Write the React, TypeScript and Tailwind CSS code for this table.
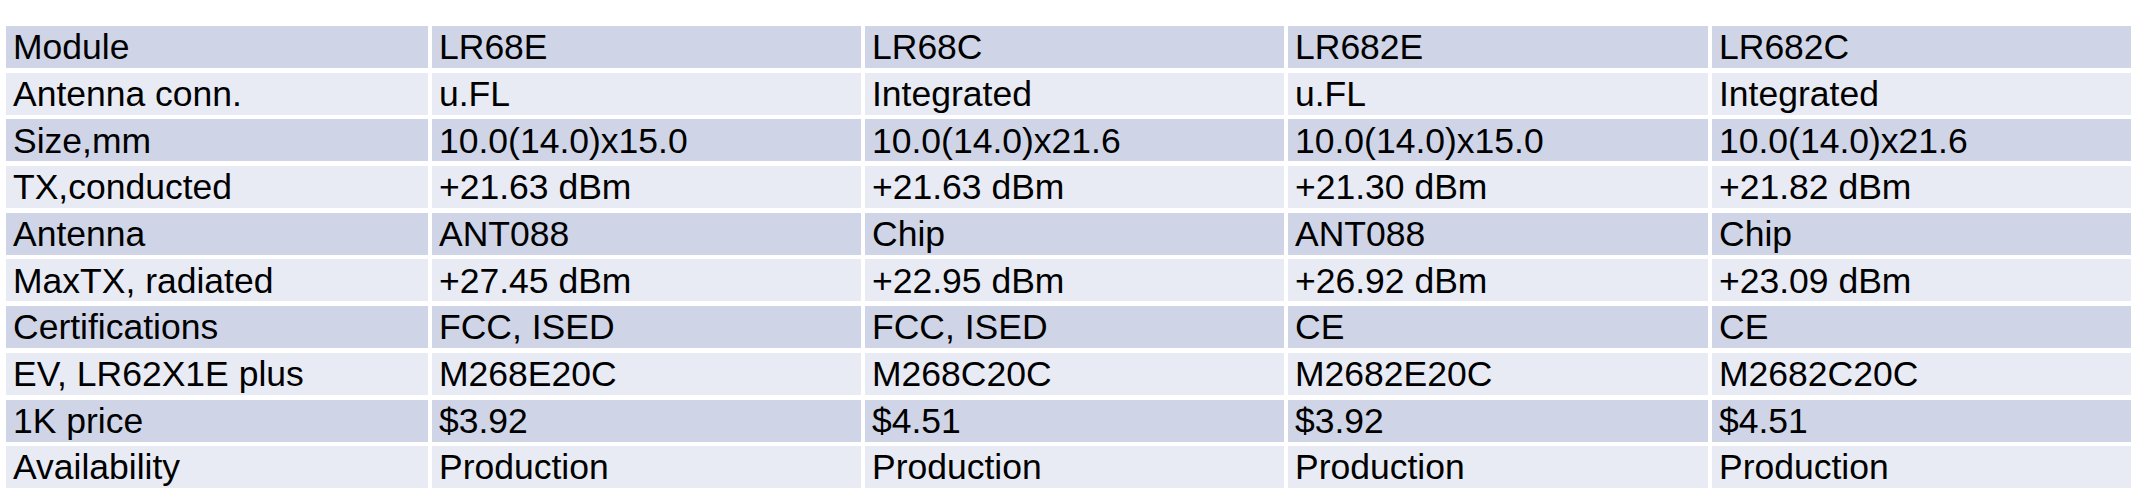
const rows: string[][] = [
  ["Module", "LR68E", "LR68C", "LR682E", "LR682C"],
  ["Antenna conn.", "u.FL", "Integrated", "u.FL", "Integrated"],
  ["Size,mm", "10.0(14.0)x15.0", "10.0(14.0)x21.6", "10.0(14.0)x15.0", "10.0(14.0)x21.6"],
  ["TX,conducted", "+21.63 dBm", "+21.63 dBm", "+21.30 dBm", "+21.82 dBm"],
  ["Antenna", "ANT088", "Chip", "ANT088", "Chip"],
  ["MaxTX, radiated", "+27.45 dBm", "+22.95 dBm", "+26.92 dBm", "+23.09 dBm"],
  ["Certifications", "FCC, ISED", "FCC, ISED", "CE", "CE"],
  ["EV, LR62X1E plus", "M268E20C", "M268C20C", "M2682E20C", "M2682C20C"],
  ["1K price", "$3.92", "$4.51", "$3.92", "$4.51"],
  ["Availability", "Production", "Production", "Production", "Production"],
];

export default function App() {
  return (
    <div className="h-[502px] w-[2152px] bg-white pl-[6px] pt-[26px] font-['Liberation_Sans',Arial,sans-serif] text-black">
      <div className="grid w-[2125px] grid-cols-[422px_429px_419px_420px_419px] gap-x-[4px] gap-y-[4.7px]">
        {rows.map((row, i) =>
          row.map((cell, j) => (
            <div
              key={`${i}-${j}`}
              className={`flex h-[42px] items-center whitespace-nowrap pl-[7px] pt-[2px] text-[35.5px] leading-none ${
                i % 2 === 0 ? "bg-[#cfd5e6]" : "bg-[#e8ebf4]"
              }`}
            >
              {cell}
            </div>
          ))
        )}
      </div>
    </div>
  );
}
